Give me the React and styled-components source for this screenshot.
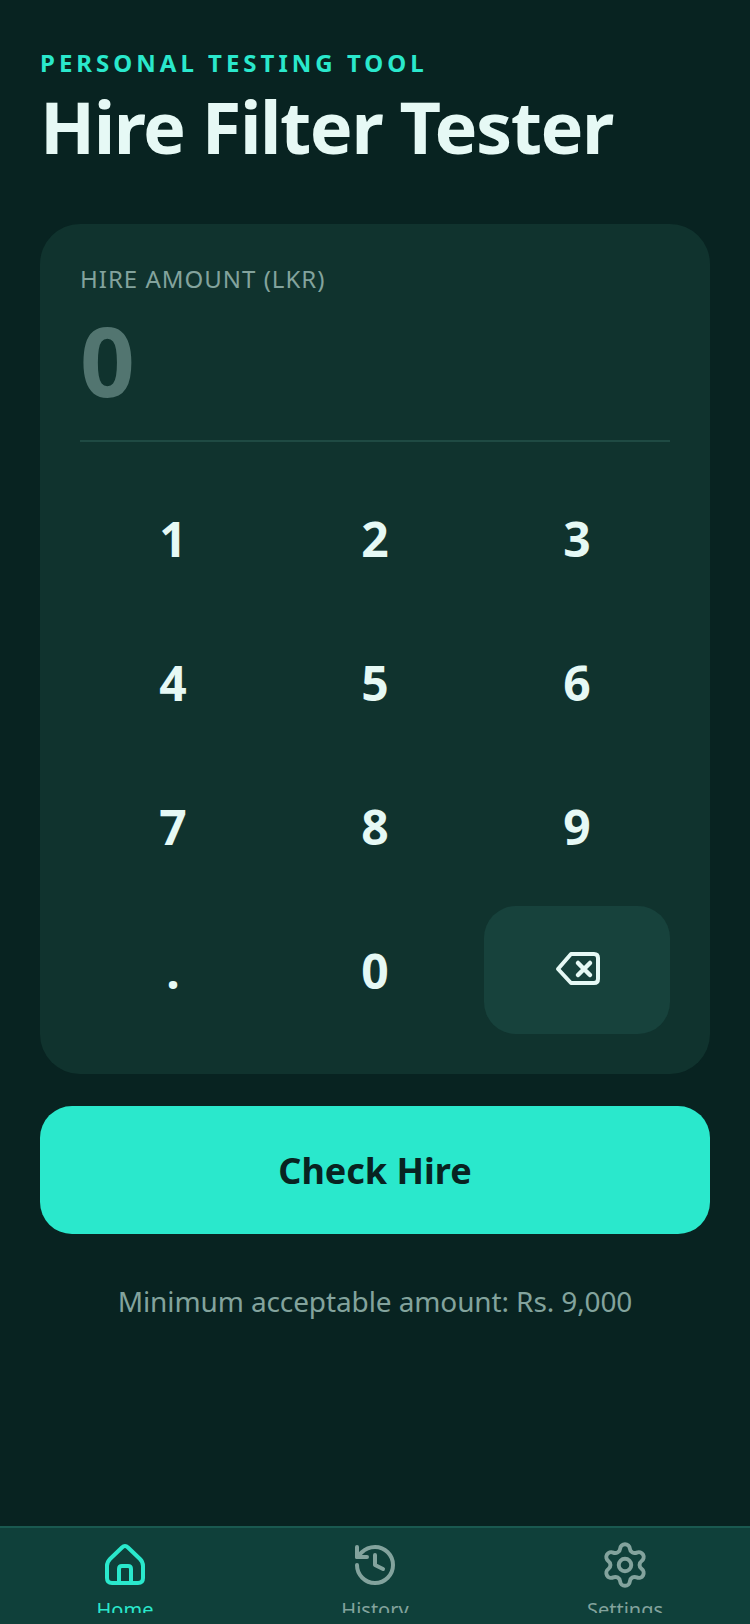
import { createGlobalStyle, styled } from 'styled-components'
import { History, Settings } from 'lucide-react'

const GlobalStyle = createGlobalStyle`
	html, body {
		margin: 0;
		padding: 0;
		background: #082321;
	}
	* {
		box-sizing: border-box;
	}
`

const keys = ['1', '2', '3', '4', '5', '6', '7', '8', '9', '.', '0']

const Screen = styled.div`
	width: 750px;
	height: 1624px;
	display: flex;
	flex-direction: column;
	overflow: hidden;
	background: #082321;
	font-family: 'Noto Sans', sans-serif;
`

const Main = styled.main`
	flex: 1;
	padding: 47px 40px 0;
`

const Eyebrow = styled.div`
	color: #2ae8cc;
	font-size: 24px;
	line-height: 32px;
	font-weight: 700;
	letter-spacing: 4px;
`

const Title = styled.h1`
	margin: 3px 0 54px;
	color: #e6f9f5;
	font-size: 72px;
	line-height: 88px;
	font-weight: 700;
	letter-spacing: -1.44px;
`

const Card = styled.section`
	padding: 40px;
	border-radius: 40px;
	background: #10332e;
`

const AmountLabel = styled.div`
	color: #83a39d;
	font-size: 24px;
	line-height: 30px;
	letter-spacing: 1px;
`

const AmountValue = styled.div`
	margin-top: 10px;
	padding-bottom: 24px;
	border-bottom: 2px solid #1f4a43;
	color: #527570;
	font-size: 96px;
	line-height: 112px;
	font-weight: 700;
`

const Keypad = styled.div`
	margin-top: 32px;
	display: grid;
	grid-template-columns: repeat(3, 1fr);
	gap: 16px;
`

const Key = styled.button`
	height: 128px;
	display: flex;
	align-items: center;
	justify-content: center;
	padding: 0;
	border: none;
	border-radius: 32px;
	background: ${(props) => (props.$muted ? '#17423c' : 'transparent')};
	color: #e6f9f5;
	font-family: inherit;
	font-size: 48px;
	font-weight: 700;
`

const CheckButton = styled.button`
	width: 100%;
	height: 128px;
	margin-top: 32px;
	border: none;
	border-radius: 32px;
	background: #2ae8cc;
	color: #082321;
	font-family: inherit;
	font-size: 36px;
	font-weight: 700;
`

const Hint = styled.p`
	margin: 47px 0 0;
	color: #83a39d;
	font-size: 28px;
	line-height: 40px;
	letter-spacing: -0.11px;
	text-align: center;
`

const BottomNav = styled.nav`
	height: 98px;
	display: grid;
	grid-template-columns: repeat(3, 1fr);
	border-top: 2px solid #1a5950;
	background: #0f403a;
`

const NavItem = styled.div`
	height: 85px;
	display: flex;
	flex-direction: column;
	align-items: center;
	padding-top: 10px;
	overflow: hidden;
	color: ${(props) => (props.$active ? '#2ae8cc' : '#83a39d')};
	font-size: 20px;
	line-height: 28px;

	svg {
		flex-shrink: 0;
	}
`

const NavIconBox = styled.div`
	width: 54px;
	height: 54px;
	flex-shrink: 0;
	display: flex;
	align-items: center;
	justify-content: center;
`

const NavLabel = styled.span`
	flex-shrink: 0;
	margin-top: 4px;
`

const HomeIcon = () => (
	<svg width='54' height='54' viewBox='0 0 54 54' fill='none' stroke='currentColor' strokeWidth='4' strokeLinejoin='round'>
		<path d='M27 8 Q25.5 8 24 9.5 L12 21 Q9 24 9 28 V40 Q9 45 14 45 H40 Q45 45 45 40 V28 Q45 24 42 21 L30 9.5 Q28.5 8 27 8 Z' />
		<path d='M21 45 V31 Q21 28 24 28 H30 Q33 28 33 31 V45' />
	</svg>
)

const BackspaceIcon = () => (
	<svg width='48' height='48' viewBox='0 0 48 48' fill='none' stroke='currentColor' strokeWidth='4' strokeLinecap='round' strokeLinejoin='round'>
		<path d='M18 8 H41 Q45 8 45 12 V33 Q45 37 41 37 H18 L5 23 Z' />
		<path d='M25 17 L37 29 M37 17 L25 29' strokeWidth='4.5' />
	</svg>
)

const App = () => {
	return (
		<Screen>
			<GlobalStyle />
			<Main>
				<Eyebrow>PERSONAL TESTING TOOL</Eyebrow>
				<Title>Hire Filter Tester</Title>
				<Card>
					<AmountLabel>HIRE AMOUNT (LKR)</AmountLabel>
					<AmountValue>0</AmountValue>
					<Keypad>
						{keys.map((key) => (
							<Key key={key}>{key}</Key>
						))}
						<Key $muted aria-label='Backspace'>
							<BackspaceIcon />
						</Key>
					</Keypad>
				</Card>
				<CheckButton>Check Hire</CheckButton>
				<Hint>Minimum acceptable amount: Rs. 9,000</Hint>
			</Main>
			<BottomNav>
				<NavItem $active>
					<NavIconBox>
						<HomeIcon />
					</NavIconBox>
					<NavLabel>Home</NavLabel>
				</NavItem>
				<NavItem>
					<NavIconBox>
						<History size={48} strokeWidth={2} />
					</NavIconBox>
					<NavLabel>History</NavLabel>
				</NavItem>
				<NavItem>
					<NavIconBox>
						<Settings size={50} strokeWidth={1.9} />
					</NavIconBox>
					<NavLabel>Settings</NavLabel>
				</NavItem>
			</BottomNav>
		</Screen>
	)
}

export default App
